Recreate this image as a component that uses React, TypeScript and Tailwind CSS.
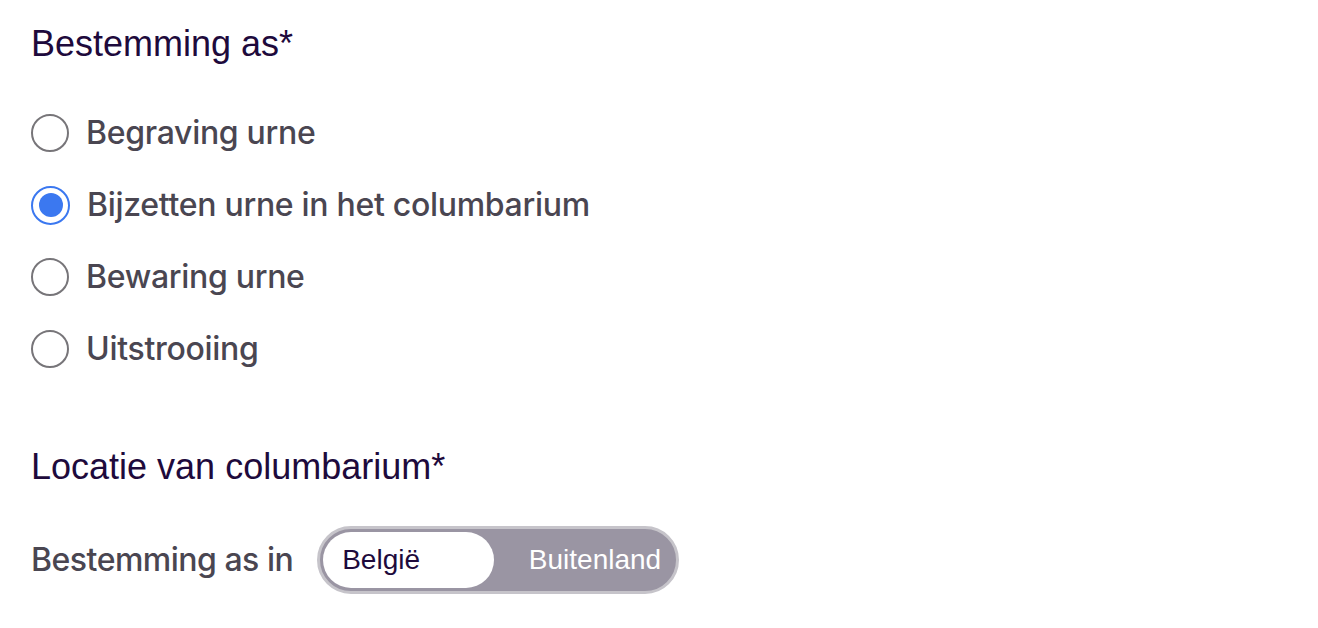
import { useState } from "react";

const options = [
  "Begraving urne",
  "Bijzetten urne in het columbarium",
  "Bewaring urne",
  "Uitstrooiing",
];

function Radio({ checked }: { checked: boolean }) {
  if (checked) {
    return (
      <span className="flex h-[39px] w-[39px] shrink-0 items-center justify-center rounded-full border-[2.5px] border-[#3b78f0] bg-white">
        <span className="h-[24px] w-[24px] rounded-full bg-[#3b78f0]" />
      </span>
    );
  }
  return <span className="h-[38px] w-[38px] shrink-0 rounded-full border-2 border-[#777579] bg-white" />;
}

export default function App() {
  const [selected, setSelected] = useState(1);
  const [location, setLocation] = useState<"be" | "abroad">("be");

  return (
    <div className="min-h-screen bg-white pl-[31px] pt-[22px]">
      {/* Bestemming */}
      <h2 className="text-[36px] leading-[44px] text-[#1e0a3c] font-['Liberation_Sans',Arial,sans-serif]">
        Bestemming as*
      </h2>
      <div className="mt-[48px] flex flex-col gap-[34px]">
        {options.map((o, i) => (
          <button
            key={o}
            onClick={() => setSelected(i)}
            className="flex h-[38px] items-center gap-[17px] text-left"
          >
            <Radio checked={selected === i} />
            <span className="text-[32px] font-medium leading-[38px] tracking-[-0.3px] text-[#4a4651] font-['Inter',sans-serif]">
              {o}
            </span>
          </button>
        ))}
      </div>

      {/* Locatie */}
      <h2 className="mt-[77px] text-[36px] leading-[44px] text-[#1e0a3c] font-['Liberation_Sans',Arial,sans-serif]">
        Locatie van columbarium*
      </h2>
      <div className="mt-[37px] flex items-center gap-[24px]">
        <span className="text-[32px] font-medium leading-[38px] tracking-[-0.5px] text-[#4a4651] font-['Inter',sans-serif]">
          Bestemming as in
        </span>
        <div className="flex h-[68px] w-[362px] items-center rounded-full border-[3px] border-[#c6c4ca] bg-[#9a95a3] p-[3px] font-['Liberation_Sans',Arial,sans-serif] text-[28px]">
          <button
            onClick={() => setLocation("be")}
            className={`flex h-full w-[171px] items-center rounded-full pl-[19px] ${
              location === "be" ? "bg-white text-[#1e0a3c]" : "text-white"
            }`}
          >
            België
          </button>
          <button
            onClick={() => setLocation("abroad")}
            className={`flex h-full flex-1 items-center justify-end rounded-full pr-[12px] ${
              location === "abroad" ? "bg-white text-[#1e0a3c]" : "text-white"
            }`}
          >
            Buitenland
          </button>
        </div>
      </div>
    </div>
  );
}
